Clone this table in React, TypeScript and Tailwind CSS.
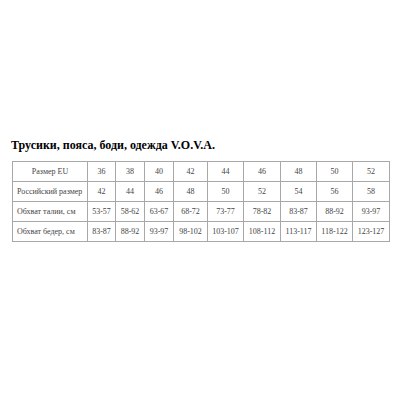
const cols = [75, 28, 29, 29, 34, 36, 37, 36, 36, 37];

const rows: string[][] = [
  ["Размер EU", "36", "38", "40", "42", "44", "46", "48", "50", "52"],
  ["Российский размер", "42", "44", "46", "48", "50", "52", "54", "56", "58"],
  ["Обхват талии, см", "53-57", "58-62", "63-67", "68-72", "73-77", "78-82", "83-87", "88-92", "93-97"],
  ["Обхват бедер, см", "83-87", "88-92", "93-97", "98-102", "103-107", "108-112", "113-117", "118-122", "123-127"],
];

export default function App() {
  return (
    <div className="w-[400px] h-[400px] bg-white font-['Liberation_Serif',serif] pt-[139px] pl-[11px]">
      <h1 className="text-[12px] leading-[13px] font-bold text-black">
        Трусики, пояса, боди, одежда V.O.V.A.
      </h1>
      <table className="mt-[9px] ml-[1px] border-collapse border border-[#8a8a8a] text-[#444] text-[8px]">
        <tbody>
          {rows.map((row, i) => (
            <tr key={i} className="h-[20px]">
              {row.map((cell, j) => (
                <td
                  key={j}
                  style={{ width: cols[j] }}
                  className={
                    "border border-[#a8a8a8] text-center whitespace-nowrap p-0 " +
                    (j === 0 && i > 0 ? "text-left pl-[4px]" : "")
                  }
                >
                  {cell}
                </td>
              ))}
            </tr>
          ))}
        </tbody>
      </table>
    </div>
  );
}
